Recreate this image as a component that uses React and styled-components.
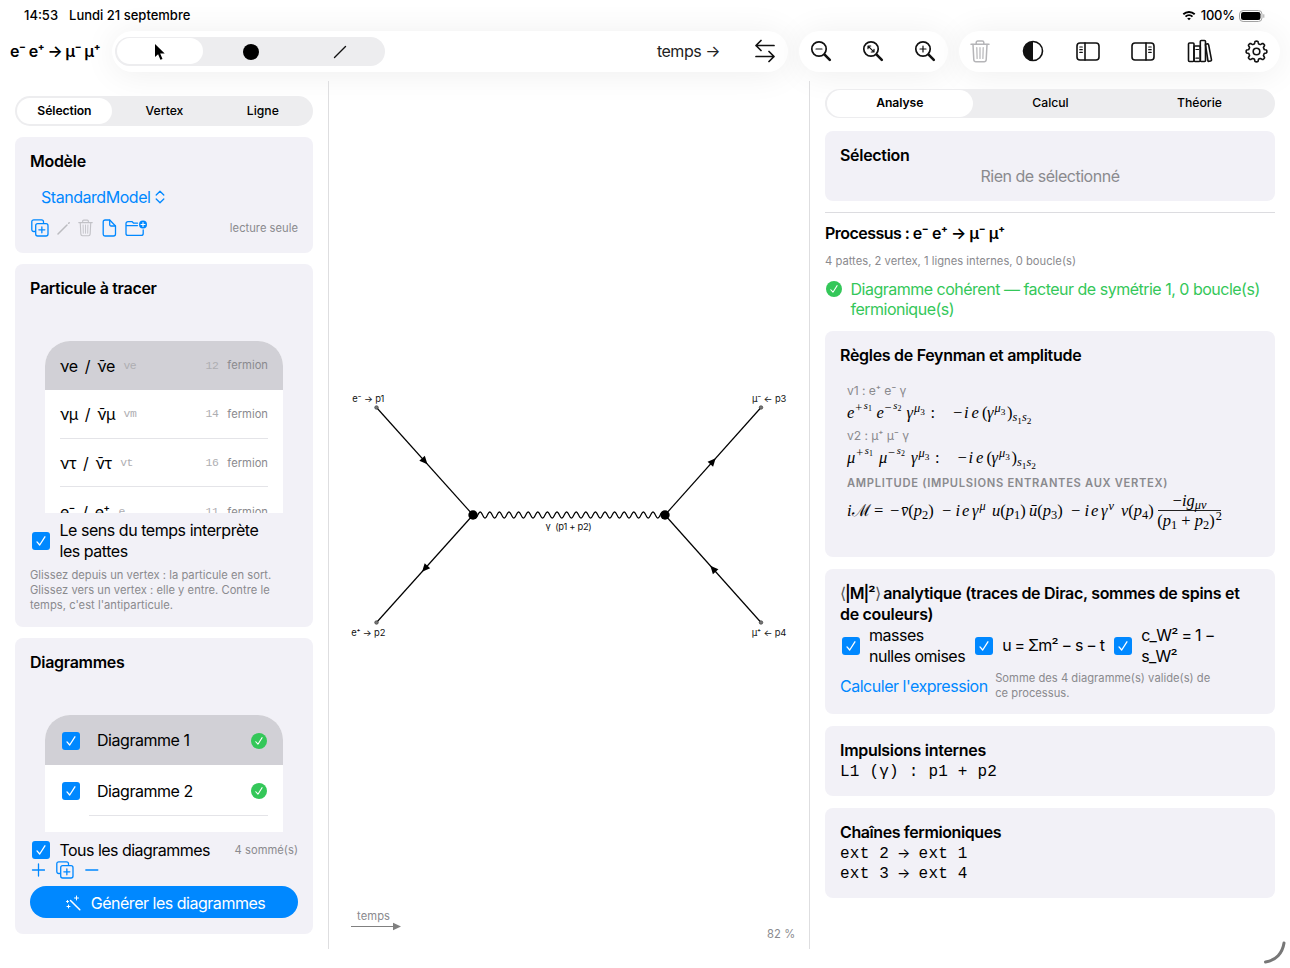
import React from 'react';
import styled, { createGlobalStyle, css } from 'styled-components';

const BLUE = '#0088ff';
const GREEN = '#34c759';
const GREY = '#8a8a8e';

const GlobalStyle = createGlobalStyle`
  * {
    box-sizing: border-box;
  }
  body {
    margin: 0;
    background: #fff;
    overflow: hidden;
  }
`;

const Screen = styled.div`
  display: flex;
  flex-direction: column;
  position: relative;
  width: 1290px;
  height: 968px;
  background: #fff;
  color: #000;
  font-family: Inter, 'Liberation Sans', sans-serif;
  font-size: 16px;
  line-height: 20.6px;
  letter-spacing: -0.48px;
  overflow: hidden;
`;

/* Top bars */

const StatusBar = styled.div`
  display: flex;
  align-items: center;
  height: 31px;
  padding: 0 25px 0 24px;
  font-size: 13px;
  font-weight: 500;
  letter-spacing: 0;
`;
const StatusDate = styled.span`
  margin-left: 11px;
  flex: 1;
`;
const StatusLevel = styled.span`
  margin: 0 4px 0 5px;
  letter-spacing: -0.2px;
`;
const Toolbar = styled.div`
  display: flex;
  align-items: center;
  height: 50px;
  padding: 0 10px 10px;
`;
const ProcessTitle = styled.h1`
  flex: none;
  width: 102px;
  margin: 0;
  font-size: 16px;
  font-weight: 600;
  line-height: 20px;
  white-space: nowrap;
  letter-spacing: -0.7px;
`;
const Pill = styled.div`
  display: flex;
  align-items: center;
  width: ${p => p.$width}px;
  height: 41px;
  margin-right: 11px;
  padding: ${p => p.$pad};
  justify-content: space-between;
  flex: none;
  border-radius: 21px;
  background: #fff;
  box-shadow: 0 2px 34px rgba(0, 0, 0, 0.07);
`;
const TimeLabel = styled.span`
  margin-left: auto;
  margin-right: 35px;
  color: #222;
`;

const Segmented = styled.div`
  display: grid;
  grid-template-columns: repeat(3, 1fr);
  flex: none;
  width: ${p => p.$width || 'auto'};
  height: ${p => p.$height || 29.5}px;
  padding: 1.5px;
  border-radius: 16px;
  background: #ededef;
`;
const Segment = styled.div`
  display: flex;
  align-items: center;
  justify-content: center;
  padding: 1px 0 0 1px;
  border-radius: 15px;
  font-size: 12.2px;
  font-weight: 500;
  letter-spacing: 0;
  ${p =>
    p.$active &&
    css`
      margin-right: 2.5px;
      padding-left: 0;
      background: #fff;
      font-weight: 600;
      letter-spacing: -0.1px;
    `}
`;

/* Columns */

const Columns = styled.div`
  display: grid;
  grid-template-columns: 329px 480px 481px;
  height: 868px;
`;
const Sidebar = styled.aside`
  display: flex;
  flex-direction: column;
  gap: 11px;
  padding: 15px 15px 0;
  border-right: 1px solid #dedee0;
`;
const Inspector = styled.aside`
  display: flex;
  flex-direction: column;
  padding: 7.5px 15px 0;
  border-left: 1px solid #dedee0;
`;
const Card = styled.section`
  display: flex;
  flex-direction: column;
  flex: none;
  height: ${p => p.$height}px;
  margin-top: ${p => p.$top || 0}px;
  padding: 14px 15px 0;
  border-radius: 8px;
  background: #f2f1f7;
`;
const Heading = styled.h2`
  margin: 0;
  font-size: 16px;
  font-weight: 600;
  line-height: 20.6px;
  white-space: nowrap;
  letter-spacing: ${p => p.$track ?? -0.3}px;
`;
const Bracket = styled.span`
  display: inline-block;
  width: 5px;
  color: #555;
  font-weight: 300;
  letter-spacing: 0;
`;
const Squared = styled.span`
  letter-spacing: -1px;
`;
const Caption = styled.span`
  color: ${GREY};
  font-size: 11.2px;
  line-height: 15px;
  letter-spacing: 0.02px;
  white-space: nowrap;
`;
const Row = styled.div`
  display: flex;
  align-items: center;
  gap: ${p => p.$gap || 0}px;
  margin-top: ${p => p.$top || 0}px;
`;
const Push = styled.span`
  display: flex;
  align-items: center;
  margin-left: auto;
`;
const ModelPicker = styled.div`
  display: flex;
  align-items: center;
  gap: 5px;
  margin: 15.5px 0 0 11px;
  color: ${BLUE};
`;
const Box = styled.span`
  display: flex;
  align-items: center;
  justify-content: center;
  flex: none;
  width: 18px;
  height: 18px;
  margin-left: 2px;
  border-radius: 3px;
  background: ${BLUE};
`;
const Badge = styled(Box)`
  width: 16px;
  height: 16px;
  margin: 0 1px;
  border-radius: 50%;
  background: ${GREEN};
`;
const Label = styled.span`
  white-space: nowrap;
  letter-spacing: ${p => p.$track ?? -0.46}px;
`;

const List = styled.div`
  flex: none;
  height: ${p => p.$height}px;
  margin: 42.4px 15px 0;
  border-radius: 25px 25px 0 0;
  background: #fff;
  overflow: hidden;
`;
const ListRow = styled.div`
  display: flex;
  align-items: center;
  height: ${p => p.$height}px;
  padding: 1px 15px 0;
  background: ${p => (p.$active ? '#d1d0d6' : 'transparent')};
`;
const Separator = styled.div`
  height: 1px;
  margin: -1px 15px 0 ${p => p.$inset}px;
  background: #e4e4e8;
`;
const Code = styled.span`
  margin-left: ${p => p.$left || 0}px;
  color: #aeaeb2;
  font-family: 'Liberation Mono', monospace;
  font-size: 11.4px;
`;
const Kind = styled(Caption)`
  margin-left: 9px;
`;
const Generate = styled.button`
  display: flex;
  align-items: center;
  justify-content: center;
  gap: 10px;
  height: 32px;
  margin: 7.5px 0 0;
  padding: 1px 4px 0 6px;
  border: none;
  border-radius: 16px;
  background: ${BLUE};
  color: #fff;
  font: inherit;
  letter-spacing: -0.48px;
`;

const Divider = styled.div`
  height: 1px;
  margin: 11px 0 10px;
  background: #dcdce0;
`;
const Muted = styled.p`
  margin: 0;
  color: ${GREY};
  text-align: center;
`;
const Coherent = styled.div`
  display: flex;
  align-items: flex-start;
  gap: 8px;
  height: 42px;
  margin-top: 10px;
  color: ${GREEN};
  white-space: nowrap;
  letter-spacing: -0.5px;

  ${Badge} {
    margin: 2px 1px 0 0.5px;
  }
`;
const MonoBlock = styled.div`
  padding-top: ${p => p.$pad ?? 2}px;
  font-family: 'Liberation Mono', monospace;
  font-size: 16px;
  line-height: 20.8px;
  letter-spacing: 0.22px;
  white-space: pre;
`;
const MonoArrow = styled.span`
  display: inline-flex;
  justify-content: center;
  width: 9.8px;
  font-family: Inter, sans-serif;
  font-size: 14px;
  line-height: 16px;
`;
const Link = styled.span`
  color: ${BLUE};
  white-space: nowrap;
`;

/* Formulas */

const Rules = styled.div`
  display: flex;
  flex-direction: column;
  padding: 14.8px 0 0 7px;
`;
const VertexName = styled.div`
  height: 22px;
  color: ${GREY};
  font-size: 12.2px;
  line-height: 22px;
  letter-spacing: -0.1px;
`;
const Section = styled.div`
  height: 26px;
  color: ${GREY};
  font-size: 11.2px;
  font-weight: 600;
  line-height: 26px;
  letter-spacing: 0.68px;
  white-space: nowrap;
`;
const Formula = styled.div`
  display: flex;
  align-items: center;
  height: ${p => p.$height || 23}px;
  padding-bottom: ${p => (p.$height ? 0 : 1)}px;
  font-family: 'Liberation Serif', serif;
  font-size: 16.5px;
  font-style: italic;
  letter-spacing: 0;
  line-height: 22px;
  white-space: nowrap;

  i {
    font-style: normal;
  }
`;
const Term = styled.span`
  flex: none;
  width: ${p => p.$w}px;
`;
const Sup = styled.span`
  position: relative;
  top: -0.48em;
  margin-left: 1px;
  font-size: 0.75em;
  line-height: 0;
`;
const Sub = styled(Sup)`
  top: 0.28em;
  margin-left: 0;
`;
const Spin = styled(Sup)`
  top: -0.3em;
  margin-left: 1.5px;
  font-size: 0.85em;
`;
const Fraction = styled.span`
  display: flex;
  flex-direction: column;
  align-items: center;
  width: 63px;
  line-height: 19px;
`;
const Numerator = styled.span`
  align-self: stretch;
  border-bottom: 1px solid #222;
  line-height: 18px;
  text-align: center;
`;

/* Canvas */

const Canvas = styled.main`
  display: flex;
`;
const CornerHandle = styled.svg`
  position: absolute;
  right: 3px;
  bottom: 2px;
`;
const Icon = styled.svg`
  flex: none;
`;

const Svg = ({ w, h, color = '#111', sw = 1.6, children }) => (
  <Icon
    width={w}
    height={h}
    viewBox={`0 0 ${w} ${h}`}
    fill="none"
    stroke={color}
    strokeWidth={sw}
    strokeLinecap="round"
    strokeLinejoin="round"
  >
    {children}
  </Icon>
);

const Check = ({ size = 10 }) => (
  <svg width={size} height={size} viewBox="0 0 10 10" fill="none" stroke="#fff" strokeWidth="1.3" strokeLinecap="round" strokeLinejoin="round">
    <path d="M1 5.9 3.7 9 8.9.8" />
  </svg>
);
const Checkbox = () => (
  <Box>
    <Check />
  </Box>
);
const Valid = () => (
  <Badge>
    <Check size={8} />
  </Badge>
);

const Magnifier = ({ children }) => (
  <Svg w={22} h={22} sw={1.7}>
    <circle cx="9" cy="9" r="7.2" />
    <path d="m14.6 14.6 5.2 5.2" strokeWidth="2.6" />
    {children}
  </Svg>
);
const Trash = ({ color, w, h }) => (
  <svg width={w} height={h} viewBox="0 0 20 23" fill="none" stroke={color} strokeWidth="1.5" strokeLinecap="round" strokeLinejoin="round">
    <path d="M1 4.3h18M6.2 4V2.5C6.2 1.6 6.8 1 7.7 1h4.600c.9 0 1.500.6 1.500 1.500V4" />
    <path d="m3 4.500.8 15.200c.1 1.300.9 2.100 2.100 2.100h8.200c1.200 0 2-.8 2.100-2.100L17 4.500" />
    <path d="M10 7.500v11M6.800 7.500l.3 11M13.200 7.500l-.3 11" strokeWidth="1.200" />
  </svg>
);
const Duplicate = () => (
  <Svg w={18} h={18} color={BLUE} sw={1.3}>
    <path d="M3.700 12.500h-.900c-1.200 0-2-.8-2-2V2.800c0-1.200.8-2 2-2h7.700c1.200 0 2 .8 2 2v.900" />
    <rect x="4.700" y="4.700" width="12.300" height="12.300" rx="2" />
    <path d="M10.850 7.800v6M7.850 10.800h6" />
  </Svg>
);
const PanelIcon = ({ right }) => (
  <svg width="24" height="19" viewBox="0 0 24 19" fill="none" stroke="#111" strokeWidth="1.6" strokeLinecap="round">
    <g transform={right ? 'translate(24 0) scale(-1 1)' : undefined}>
      <rect x="1" y="1" width="22" height="17" rx="3" />
      <path d="M9 1v17" />
      <path d="M3.800 5h2.500M3.800 7.700h2.500M3.800 10.400h2.500" strokeWidth="1.200" />
    </g>
  </svg>
);
const Books = () => (
  <Svg w={26} h={24} sw={1.6}>
    <rect x="1.500" y="4" width="5.500" height="18.500" rx="1" />
    <rect x="7" y="7" width="6.300" height="15.500" rx="1" />
    <rect x="13.300" y="1.500" width="5.200" height="21" rx="1" />
    <path d="m18.500 5.200 2-.3c.6-.1 1 .2 1.100.8l2.900 15.200c.1.600-.2 1-.8 1.100l-1.700.3c-.6.100-1-.2-1.100-.8L18.500 6" />
    <path d="M8.900 10.500h2.700M8.900 19.200h2.700" strokeWidth="1.200" />
  </Svg>
);

const gearPath = () => {
  const pts = [];
  for (let deg = 0; deg < 360; deg += 3) {
    const a = (deg * Math.PI) / 180;
    const r = 9.1 + 1.25 * Math.tanh(2.6 * Math.cos(8 * a));
    pts.push(`${(11.5 + r * Math.sin(a)).toFixed(2)} ${(11.5 - r * Math.cos(a)).toFixed(2)}`);
  }
  return `M${pts.join('L')}Z`;
};
const Gear = () => (
  <Svg w={23} h={23} sw={1.6}>
    <path d={gearPath()} />
    <circle cx="11.500" cy="11.500" r="3.300" />
  </Svg>
);

const TopBars = () => (
  <>
    <StatusBar>
      <span>14:53</span>
      <StatusDate>Lundi 21 septembre</StatusDate>
      <Svg w={14} h={11} color="#000" sw={1.9}>
        <path d="M1.300 4.200a8.300 8.300 0 0 1 11.400 0M3.500 6.600a5.200 5.200 0 0 1 7 0" strokeLinecap="butt" />
        <path d="M7 10.300 5.200 8.500a2.600 2.600 0 0 1 3.600 0Z" fill="#000" stroke="none" />
      </Svg>
      <StatusLevel>100%</StatusLevel>
      <Svg w={26} h={12} color="#a5a5a5" sw={1}>
        <rect x=".5" y=".5" width="22.500" height="11" rx="3.600" />
        <rect x="2" y="2" width="19.500" height="8" rx="2.300" fill="#000" stroke="none" />
        <path d="M24.800 4.700v2.600" />
      </Svg>
    </StatusBar>
    <Toolbar>
      <ProcessTitle>e⁻ e⁺ → μ⁻ μ⁺</ProcessTitle>
      <Pill $width={676} $pad="0 13px 0 3px">
        <Segmented $width="270px" $height={29}>
          <Segment $active>
            <svg width="12" height="18" viewBox="0 0 12 18">
              <path d="M1 1v13l3.100-2.800 2.300 5.600 2.100-.9-2.300-5.400H10.700Z" fill="#000" />
            </svg>
          </Segment>
          <Segment>
            <svg width="16" height="16" viewBox="0 0 16 16">
              <circle cx="8" cy="8" r="8" />
            </svg>
          </Segment>
          <Segment>
            <Svg w={14} h={14} sw={1.4}>
              <path d="M1.500 12.500l11-11" />
            </Svg>
          </Segment>
        </Segmented>
        <TimeLabel>temps →</TimeLabel>
        <Svg w={20} h={24} sw={1.7}>
          <path d="M19 6.500H1M6 1.500l-5 5 5 5M1 17.500h18M14 12.500l5 5-5 5" />
        </Svg>
      </Pill>
      <Pill $width={149} $pad="0 12px 0 11px">
        <Magnifier>
          <path d="M6 9h6" strokeWidth="1.200" />
        </Magnifier>
        <Magnifier>
          <path d="m6.200 6.200 5.600 5.600M6 8.700V6h2.700M12 9.300V12H9.300" strokeWidth="1.200" />
        </Magnifier>
        <Magnifier>
          <path d="M6 9h6M9 6v6" strokeWidth="1.200" />
        </Magnifier>
      </Pill>
      <Pill $width={321} $pad="0 12px 0 11px">
        <Trash color="#b5b5b8" w={20} h={23} />
        <svg width="22" height="22" viewBox="0 0 22 22">
          <circle cx="11" cy="11" r="9.500" fill="none" stroke="#111" strokeWidth="1.600" />
          <path d="M11 1.500a9.500 9.500 0 0 0 0 19Z" fill="#111" />
        </svg>
        <PanelIcon />
        <PanelIcon right />
        <Books />
        <Gear />
      </Pill>
    </Toolbar>
  </>
);

const particles = [
  { name: 'νe', anti: 'ν̄e', code: 've', pdg: 12 },
  { name: 'νμ', anti: 'ν̄μ', code: 'vm', pdg: 14 },
  { name: 'ντ', anti: 'ν̄τ', code: 'vt', pdg: 16 },
  { name: 'e⁻', anti: 'e⁺', code: 'e', pdg: 11 }
];

const LeftPanel = () => (
  <Sidebar>
    <Segmented>
      <Segment $active>Sélection</Segment>
      <Segment>Vertex</Segment>
      <Segment>Ligne</Segment>
    </Segmented>
    <Card $height={116.5}>
      <Heading>Modèle</Heading>
      <ModelPicker>
        <Label>StandardModel</Label>
        <Svg w={10} h={14} color={BLUE} sw={1.3}>
          <path d="M1.200 5 5 1.200 8.800 5M1.200 9 5 12.800 8.800 9" />
        </Svg>
      </ModelPicker>
      <Row $top={12.3}>
        <Row $gap={8.2}>
          <Svg w={19} h={18} color={BLUE} sw={1.3}>
            <path d="M4.700 12.500h-.900c-1.200 0-2-.8-2-2V2.800c0-1.200.8-2 2-2h7.700c1.200 0 2 .8 2 2v.900" />
            <rect x="5.700" y="4.700" width="12.300" height="12.300" rx="2" />
            <path d="M11.850 7.800v6M8.850 10.800h6" />
          </Svg>
          <Svg w={13} h={14} color="#bcbcc0" sw={1.5}>
            <path d="M1 13 10 4M11.700 2.300l.5-.5" />
          </Svg>
          <Trash color="#c2c2c7" w={15} h={18} />
          <Svg w={15} h={18} color={BLUE} sw={1.3}>
            <path d="M1.200 3c0-1.300.7-2 2-2h4.500l5.800 6v8c0 1.300-.7 2-2 2H3.200c-1.300 0-2-.7-2-2Z" />
            <path d="M7.700 1.200v4.300c0 .9.500 1.500 1.400 1.500h4.200" />
          </Svg>
          <Svg w={23} h={17} color={BLUE} sw={1.3}>
            <path d="M12.500 3.200H8.700L7.200 1.700H3c-1.200 0-2 .7-2 1.900v9.800c0 1.200.8 2 2 2h13.200c1.200 0 2-.8 2-2v-3.600M1 5.600h11.500" />
            <circle cx="18" cy="4.500" r="4" fill={BLUE} stroke="none" />
            <path d="M18 2.500v4M16 4.500h4" stroke="#fff" strokeWidth="1.100" />
          </Svg>
        </Row>
        <Push>
          <Caption>lecture seule</Caption>
        </Push>
      </Row>
    </Card>
    <Card $height={363}>
      <Heading>Particule à tracer</Heading>
      <List $height={172}>
        {particles.map((p, i) => (
          <React.Fragment key={p.code}>
            <ListRow $height={48.8} $active={i === 0}>
              <Label $track={-0.75}>
                {p.name}&nbsp; / &nbsp;{p.anti}
              </Label>
              <Code $left={9}>{p.code}</Code>
              <Push>
                <Code>{p.pdg}</Code>
                <Kind>fermion</Kind>
              </Push>
            </ListRow>
            {i > 0 && <Separator $inset={15} />}
          </React.Fragment>
        ))}
      </List>
      <Row $gap={9.5} $top={7}>
        <Checkbox />
        <Label>
          Le sens du temps interprète
          <br />
          les pattes
        </Label>
      </Row>
      <Row $top={7}>
        <Caption>
          Glissez depuis un vertex : la particule en sort.
          <br />
          Glissez vers un vertex : elle y entre. Contre le
          <br />
          temps, c'est l'antiparticule.
        </Caption>
      </Row>
    </Card>
    <Card $height={296}>
      <Heading>Diagrammes</Heading>
      <List $height={117}>
        {[1, 2].map(n => (
          <React.Fragment key={n}>
            <ListRow $height={50.5} $active={n === 1}>
              <Row $gap={17}>
                <Checkbox />
                <Label>Diagramme {n}</Label>
              </Row>
              <Push>
                <Valid />
              </Push>
            </ListRow>
            {n > 1 && <Separator $inset={44} />}
          </React.Fragment>
        ))}
      </List>
      <Row $gap={9.5} $top={7.8}>
        <Checkbox />
        <Label $track={-0.53}>Tous les diagrammes</Label>
        <Push>
          <Caption>4 sommé(s)</Caption>
        </Push>
      </Row>
      <Row $gap={11} $top={0.5}>
        <Svg w={15} h={18} color={BLUE} sw={1.3}>
          <path d="M2.500 9h12M8.500 3v12" />
        </Svg>
        <Duplicate />
        <Svg w={14} h={18} color={BLUE} sw={1.3}>
          <path d="M.8 9h12" />
        </Svg>
      </Row>
      <Generate>
        <Svg w={16} h={16} color="#fff" sw={1.5}>
          <path d="m5.500 5.500 9.300 9.300" />
          <path d="M11.500 1v4M9.500 3h4M3.500 10v3M2 11.500h3M2.500 5.500v2M1.500 6.500h2" strokeWidth="1" />
        </Svg>
        Générer les diagrammes
      </Generate>
    </Card>
  </Sidebar>
);

const wave = () => {
  let d = 'M473 515';
  for (let x = 0; x <= 192; x += 0.6) {
    d += `L${(473 + x).toFixed(1)} ${(515 + 3 * Math.sin((x / 9.6) * 2 * Math.PI)).toFixed(2)}`;
  }
  return d;
};

const fermions = [
  { from: [376.5, 407.5], to: [473, 515] },
  { from: [473, 515], to: [376.5, 622.5] },
  { from: [665, 515], to: [761, 407.5] },
  { from: [761, 622.5], to: [665, 515] }
];
const ends = [[376.5, 407.5], [376.5, 622.5], [761, 407.5], [761, 622.5]];

const Fermion = ({ from, to }) => {
  const angle = (Math.atan2(to[1] - from[1], to[0] - from[0]) * 180) / Math.PI;
  return (
    <g>
      <path d={`M${from}L${to}`} stroke="#000" strokeWidth="1.200" />
      <path
        d="M-4-3.700 4 0-4 3.700Z"
        transform={`translate(${(from[0] + to[0]) / 2} ${(from[1] + to[1]) / 2}) rotate(${angle})`}
      />
    </g>
  );
};

const Diagram = () => (
  <Canvas>
    <svg width="480" height="868" viewBox="329 81 480 868" fontFamily="Inter, sans-serif" fontSize="9.400">
      {fermions.map((f, i) => (
        <Fermion key={i} {...f} />
      ))}
      <path d={wave()} fill="none" stroke="#000" strokeWidth="1.200" />
      <circle cx="473" cy="515" r="4.700" />
      <circle cx="665" cy="515" r="4.700" />
      {ends.map(([x, y]) => (
        <circle key={`${x}-${y}`} cx={x} cy={y} r="1.800" fill="#777" stroke="#333" strokeWidth=".6" />
      ))}
      <g textAnchor="middle" fill="#111" letterSpacing="-.15">
        <text x="368.200" y="402">e⁻ → p1</text>
        <text x="368.200" y="636">e⁺ → p2</text>
        <text x="769" y="402">μ⁻ ← p3</text>
        <text x="769" y="636">μ⁺ ← p4</text>
        <text x="568.500" y="529.500" letterSpacing="-.3" xmlSpace="preserve">γ  (p1 + p2)</text>
      </g>
      <g fill={GREY} fontSize="11.200" letterSpacing=".1">
        <text x="357" y="920">temps</text>
        <text x="767" y="938">82 %</text>
      </g>
      <path d="M351 926.500h43" stroke="#808080" strokeWidth="1" />
      <path d="M393 922.700 401 926.500 393 930.300Z" fill="#808080" />
    </svg>
  </Canvas>
);

const RuleFormula = ({ name, widths }) => (
  <Formula>
    <Term $w={widths[0]}>
      {name}
      <Sup>
        <i>+</i>
        <Spin>s<Sub><i>1</i></Sub></Spin>
      </Sup>
    </Term>
    <Term $w={widths[1]}>
      {name}
      <Sup>
        <i>−</i>
        <Spin>s<Sub><i>2</i></Sub></Spin>
      </Sup>
    </Term>
    <Term $w={24}>γ<Sup>μ<Sub><i>3</i></Sub></Sup></Term>
    <Term $w={22.5}><i>:</i></Term>
    <Term $w={11}><i>−</i></Term>
    <Term $w={7.5}>i</Term>
    <Term $w={10.5}>e</Term>
    <Term $w={5}><i>(</i></Term>
    <Term $w={20}>γ<Sup>μ<Sub><i>3</i></Sub></Sup></Term>
    <Term $w={5.5}><i>)</i></Term>
    <Term>
      <Sub>
        s<Sub><i>1</i></Sub>s<Sub><i>2</i></Sub>
      </Sub>
    </Term>
  </Formula>
);

const Spinor = ({ w, name, n }) => (
  <Term $w={w}>
    {name}<i>(</i>p<Sub><i>{n}</i></Sub><i>)</i>
  </Term>
);

const Coupling = ({ index }) => (
  <>
    <Term $w={13.5}><i>−</i></Term>
    <Term $w={6.5}>i</Term>
    <Term $w={10}>e</Term>
    <Term $w={20}>γ<Sup>{index}</Sup></Term>
  </>
);

const RightPanel = () => (
  <Inspector>
    <Segmented>
      <Segment $active>Analyse</Segment>
      <Segment>Calcul</Segment>
      <Segment>Théorie</Segment>
    </Segmented>
    <Card $height={70} $top={13}>
      <Heading>Sélection</Heading>
      <Muted>Rien de sélectionné</Muted>
    </Card>
    <Divider />
    <Heading $track={-0.54}>Processus : e⁻ e⁺ → μ⁻ μ⁺</Heading>
    <Row $top={10}>
      <Caption>4 pattes, 2 vertex, 1 lignes internes, 0 boucle(s)</Caption>
    </Row>
    <Coherent>
      <Valid />
      <span>
        Diagramme cohérent — facteur de symétrie 1, 0 boucle(s)
        <br />
        fermionique(s)
      </span>
    </Coherent>
    <Card $height={226.5} $top={10}>
      <Heading>Règles de Feynman et amplitude</Heading>
      <Rules>
        <VertexName>v1 : e⁺ e⁻ γ</VertexName>
        <RuleFormula name="e" widths={[29.5, 30]} />
        <VertexName>v2 : μ⁺ μ⁻ γ</VertexName>
        <RuleFormula name="μ" widths={[32, 32]} />
        <Section>AMPLITUDE (IMPULSIONS ENTRANTES AUX VERTEX)</Section>
        <Formula $height={30}>
          <Term $w={5}>i</Term>
          <Term $w={22}><i>ℳ</i></Term>
          <Term $w={16}><i>=</i></Term>
          <Term $w={11}><i>−</i></Term>
          <Spinor w={41} name="v̄" n={2} />
          <Coupling index="μ" />
          <Spinor w={37} name="u" n={1} />
          <Spinor w={42} name="ū" n={3} />
          <Coupling index="ν" />
          <Spinor w={37} name="v" n={4} />
          <Fraction>
            <Numerator><i>−</i>ig<Sub>μν</Sub></Numerator>
            <span><i>(</i>p<Sub><i>1</i></Sub> <i>+</i> p<Sub><i>2</i></Sub><i>)</i><Sup><i>2</i></Sup></span>
          </Fraction>
        </Formula>
      </Rules>
    </Card>
    <Card $height={144.700} $top={12}>
      <Heading>
        <Bracket>⟨</Bracket><Squared>|M|²</Squared><Bracket>⟩</Bracket> analytique (traces de Dirac, sommes de spins et
        <br />
        de couleurs)
      </Heading>
      <Row $gap={8} $top={0.8}>
        <Row $gap={9}>
          <Checkbox />
          <Label $track={-0.5}>
            masses
            <br />
            nulles omises
          </Label>
        </Row>
        <Row $gap={9}>
          <Checkbox />
          <Label $track={-0.8}>u = Σm² − s − t</Label>
        </Row>
        <Row $gap={9}>
          <Checkbox />
          <Label $track={-0.7}>
            c_W² = 1 −
            <br />
            s_W²
          </Label>
        </Row>
      </Row>
      <Row $gap={7.5} $top={4.6}>
        <Link>Calculer l'expression</Link>
        <Caption>
          Somme des 4 diagramme(s) valide(s) de
          <br />
          ce processus.
        </Caption>
      </Row>
    </Card>
    <Card $height={70} $top={12}>
      <Heading>Impulsions internes</Heading>
      <MonoBlock>L1 (γ) : p1 + p2</MonoBlock>
    </Card>
    <Card $height={90.5} $top={12}>
      <Heading $track={-0.4}>Chaînes fermioniques</Heading>
      <MonoBlock $pad={1.2}>
        ext 2 <MonoArrow>→</MonoArrow> ext 1
        <br />
        ext 3 <MonoArrow>→</MonoArrow> ext 4
      </MonoBlock>
    </Card>
  </Inspector>
);

const App = () => (
  <Screen>
    <GlobalStyle />
    <TopBars />
    <Columns>
      <LeftPanel />
      <Diagram />
      <RightPanel />
    </Columns>
    <CornerHandle width="24" height="26" viewBox="0 0 24 26" fill="none" stroke="#777" strokeWidth="3" strokeLinecap="round">
      <path d="M21 3C19.500 13 13 20.500 2.500 22" />
    </CornerHandle>
  </Screen>
);

export default App;
